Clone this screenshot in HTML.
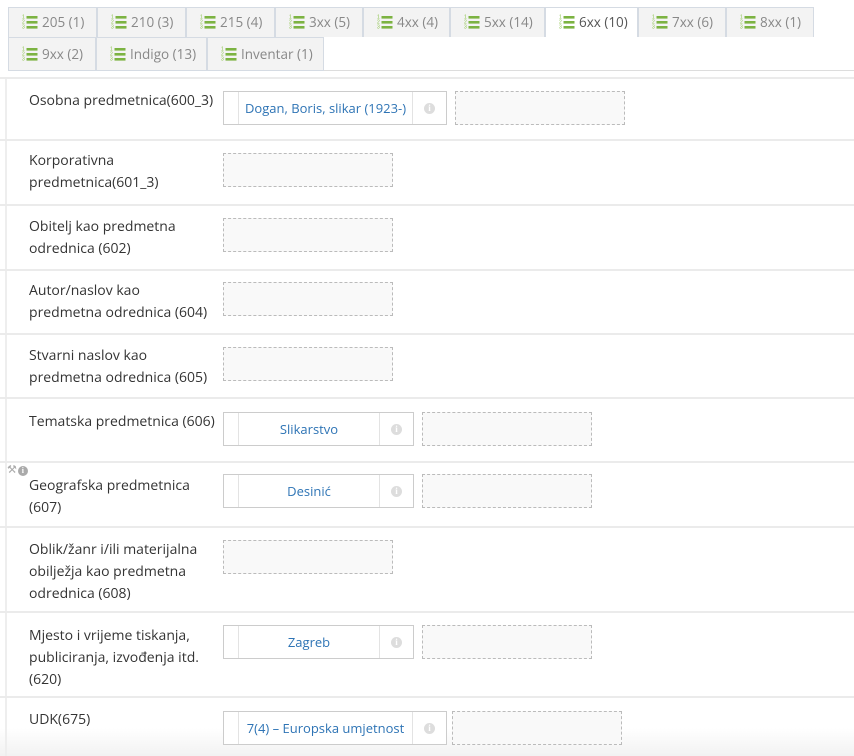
<!DOCTYPE html>
<html><head><meta charset="utf-8"><style>
*{box-sizing:border-box;margin:0;padding:0}
body{width:854px;height:756px;overflow:hidden;background:#fff;font-family:"Open Sans","Liberation Sans",sans-serif;color:#333;position:relative}
.tab{position:absolute;height:30px;border:1px solid #d5dbe3;border-bottom:none;background:#f3f3f3;color:#888;font-size:13.5px;line-height:28px;padding-left:13px;white-space:nowrap}
.tab.act{background:#fff;color:#555;border-color:#d5dbe3}
.ic{display:inline-block;vertical-align:middle;margin-right:4px;margin-top:-3px}
.sep{position:absolute;left:0;width:854px;height:2px;background:#ebebeb}
.lbl{position:absolute;left:29px;font-size:14px;line-height:22px;color:#333}
.dash{position:absolute;border:1px dashed #bbb;background:#f9f9f9;height:34px}
.box{position:absolute;border:1px solid #ccc;height:34px;background:#fff;display:flex}
.box .l{width:15px;border-right:1px solid #e3e3e3}
.box .t{flex:1;color:#2e74b5;font-size:13px;text-align:center;line-height:32px;border-right:1px solid #e3e3e3;white-space:nowrap}
.box .i{width:33px;display:flex;align-items:center;justify-content:center}
.info{width:11px;height:11px;border-radius:50%;background:#ddd;color:#fff;font-size:9px;font-weight:bold;line-height:11px;text-align:center;font-family:"Liberation Serif",serif}
.lb{position:absolute;left:5px;width:2px;background:#eee}
</style></head><body>
<svg width="0" height="0" style="position:absolute"><defs><g id="li"><text x="0" y="4.5" font-size="5" fill="#8bc34a" font-family="Liberation Sans">1</text><text x="0" y="9.5" font-size="5" fill="#8bc34a" font-family="Liberation Sans">2</text><text x="0" y="14.5" font-size="5" fill="#8bc34a" font-family="Liberation Sans">3</text><rect x="4.5" y="2" width="11" height="2.6" fill="#7cb342"/><rect x="4.5" y="7" width="11" height="2.6" fill="#7cb342"/><rect x="4.5" y="12" width="11" height="2.6" fill="#7cb342"/></g></defs></svg>

<div style="position:absolute;left:8px;top:8px;width:1px;height:62px;background:#d5dbe3"></div>

<div class="tab" style="left:8px;top:7px;width:89px"><svg class="ic" width="16" height="16"><use href="#li"/></svg>205 (1)</div>
<div class="tab" style="left:97px;top:7px;width:89px"><svg class="ic" width="16" height="16"><use href="#li"/></svg>210 (3)</div>
<div class="tab" style="left:186px;top:7px;width:89px"><svg class="ic" width="16" height="16"><use href="#li"/></svg>215 (4)</div>
<div class="tab" style="left:275px;top:7px;width:88px"><svg class="ic" width="16" height="16"><use href="#li"/></svg>3xx (5)</div>
<div class="tab" style="left:363px;top:7px;width:87px"><svg class="ic" width="16" height="16"><use href="#li"/></svg>4xx (4)</div>
<div class="tab" style="left:450px;top:7px;width:95px"><svg class="ic" width="16" height="16"><use href="#li"/></svg>5xx (14)</div>
<div class="tab act" style="left:545px;top:7px;width:93px"><svg class="ic" width="16" height="16"><use href="#li"/></svg>6xx (10)</div>
<div class="tab" style="left:638px;top:7px;width:88px"><svg class="ic" width="16" height="16"><use href="#li"/></svg>7xx (6)</div>
<div class="tab" style="left:726px;top:7px;width:88px"><svg class="ic" width="16" height="16"><use href="#li"/></svg>8xx (1)</div>
<div class="tab" style="left:8px;top:37px;width:88px;height:34px;line-height:32px;border-bottom:1px solid #d5dbe3"><svg class="ic" width="16" height="16"><use href="#li"/></svg>9xx (2)</div>
<div class="tab" style="left:96px;top:37px;width:111px;height:34px;line-height:32px;border-bottom:1px solid #d5dbe3"><svg class="ic" width="16" height="16"><use href="#li"/></svg>Indigo (13)</div>
<div class="tab" style="left:207px;top:37px;width:117px;height:34px;line-height:32px;border-bottom:1px solid #d5dbe3"><svg class="ic" width="16" height="16"><use href="#li"/></svg>Inventar (1)</div>

<div style="position:absolute;left:324px;top:70px;width:530px;height:1px;background:#ddd"></div>
<div class="sep" style="top:77px;height:2px"></div>

<div class="lb" style="top:79px;height:677px"></div>

<div class="lbl" style="top:90px">Osobna predmetnica(600_3)</div>
<div class="box" style="left:223px;top:91px;width:224px"><div class="l"></div><div class="t">Dogan, Boris, slikar (1923-)</div><div class="i"><div class="info">i</div></div></div>
<div class="dash" style="left:455px;top:91px;width:170px"></div>

<div class="sep" style="top:139px"></div>
<div class="lbl" style="top:150px">Korporativna<br>predmetnica(601_3)</div>
<div class="dash" style="left:223px;top:153px;width:170px"></div>

<div class="sep" style="top:204px"></div>
<div class="lbl" style="top:216px">Obitelj kao predmetna<br>odrednica (602)</div>
<div class="dash" style="left:223px;top:218px;width:170px"></div>

<div class="sep" style="top:269px"></div>
<div class="lbl" style="top:280px">Autor/naslov kao<br>predmetna odrednica (604)</div>
<div class="dash" style="left:223px;top:282px;width:170px"></div>

<div class="sep" style="top:333px"></div>
<div class="lbl" style="top:345px">Stvarni naslov kao<br>predmetna odrednica (605)</div>
<div class="dash" style="left:223px;top:347px;width:170px"></div>

<div class="sep" style="top:397px"></div>
<div class="lbl" style="top:411px">Tematska predmetnica (606)</div>
<div class="box" style="left:223px;top:412px;width:191px"><div class="l"></div><div class="t">Slikarstvo</div><div class="i"><div class="info">i</div></div></div>
<div class="dash" style="left:422px;top:412px;width:170px"></div>

<div class="sep" style="top:461px"></div>
<div style="position:absolute;left:7px;top:463px;width:30px;height:14px;background:#fff;font-size:11px;color:#aaa;line-height:14px">&#9874;<span style="display:inline-block;width:10px;height:10px;border-radius:50%;background:#aaa;color:#fff;font-size:8px;line-height:10px;text-align:center;font-weight:bold;margin-left:1px;font-family:'Liberation Serif',serif">i</span></div>
<div class="lbl" style="top:475px">Geografska predmetnica<br>(607)</div>
<div class="box" style="left:223px;top:474px;width:191px"><div class="l"></div><div class="t">Desinić</div><div class="i"><div class="info">i</div></div></div>
<div class="dash" style="left:422px;top:474px;width:170px"></div>

<div class="sep" style="top:526px"></div>
<div class="lbl" style="top:539px">Oblik/žanr i/ili materijalna<br>obilježja kao predmetna<br>odrednica (608)</div>
<div class="dash" style="left:223px;top:540px;width:170px"></div>

<div class="sep" style="top:611px"></div>
<div class="lbl" style="top:625px">Mjesto i vrijeme tiskanja,<br>publiciranja, izvođenja itd.<br>(620)</div>
<div class="box" style="left:223px;top:625px;width:191px"><div class="l"></div><div class="t">Zagreb</div><div class="i"><div class="info">i</div></div></div>
<div class="dash" style="left:422px;top:625px;width:170px"></div>

<div class="sep" style="top:696px"></div>
<div class="lbl" style="top:709px">UDK(675)</div>
<div style="position:absolute;left:0;top:728px;width:854px;height:28px;background:linear-gradient(#fff,#f2f2f2)"></div>
<div class="lb" style="top:698px;height:58px"></div>
<div class="box" style="left:223px;top:711px;width:224px"><div class="l"></div><div class="t">7(4) – Europska umjetnost</div><div class="i"><div class="info">i</div></div></div>
<div class="dash" style="left:452px;top:711px;width:170px"></div>
</body></html>
